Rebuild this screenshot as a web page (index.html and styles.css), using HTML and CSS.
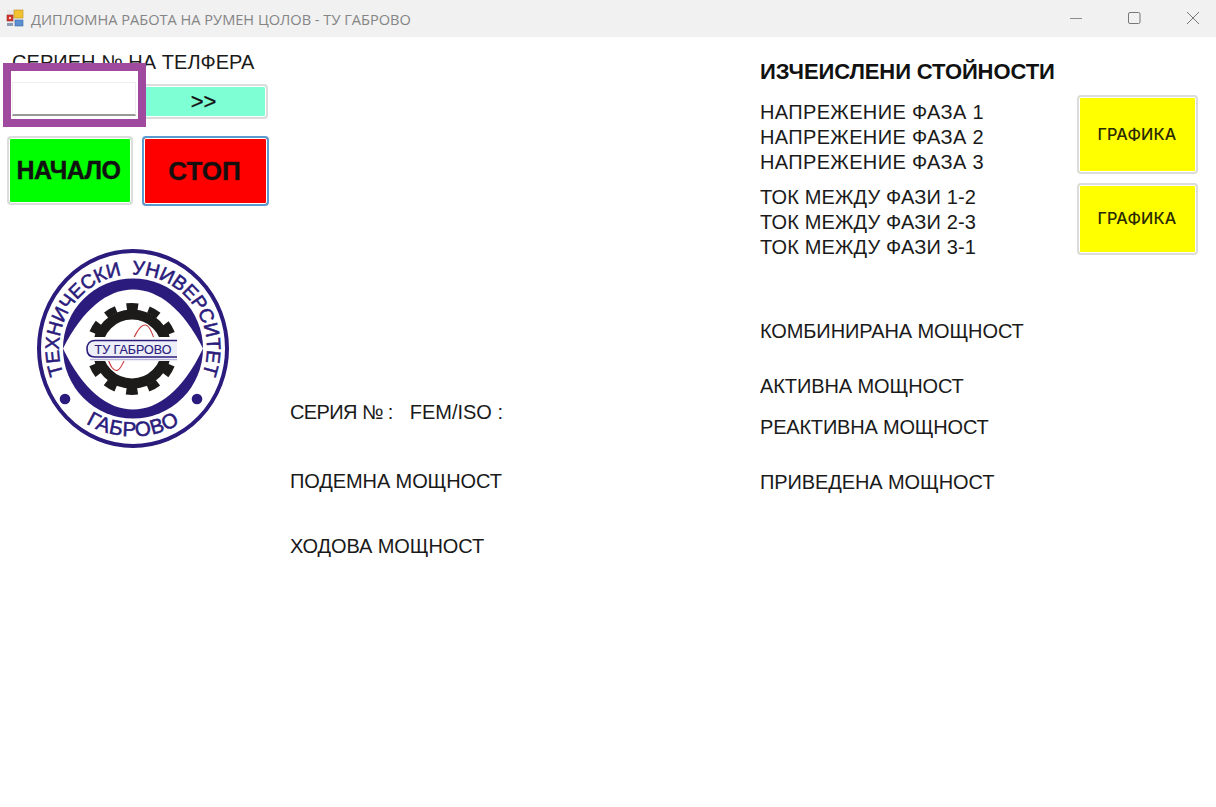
FILE: index.html
```html
<!DOCTYPE html>
<html lang="bg">
<head>
<meta charset="utf-8">
<title>ДИПЛОМНА РАБОТА НА РУМЕН ЦОЛОВ - ТУ ГАБРОВО</title>
<link rel="stylesheet" href="styles.css">
</head>
<body>
<div class="window">
  <header class="titlebar">
    <svg class="app-icon" width="18" height="18" viewBox="0 0 18 18">
      <rect x="1" y="1" width="16" height="16" fill="#e8e8ec"/>
      <rect x="8" y="1" width="9" height="8" fill="#f2c230" stroke="#b98c20" stroke-width=".6"/>
      <rect x="1" y="6" width="6" height="6" fill="#d8342c" stroke="#90302a" stroke-width=".6"/>
      <rect x="3" y="8" width="2" height="2" fill="#f4d0c8"/>
      <rect x="9" y="11" width="8" height="6" fill="#5b8fd0" stroke="#3a6aa8" stroke-width=".6"/>
      <rect x="1" y="14" width="6" height="3" fill="#8a9ab0"/>
    </svg>
    <span class="title">ДИПЛОМНА РАБОТА НА РУМЕН ЦОЛОВ - ТУ ГАБРОВО</span>
    <div class="controls">
      <svg width="14" height="14" viewBox="0 0 14 14"><path d="M2 7.5H14" stroke="#8c8c8c" stroke-width="1" fill="none"/></svg>
      <svg width="14" height="14" viewBox="0 0 14 14"><rect x="1.5" y="1.5" width="11.5" height="11" rx="1.5" stroke="#777" stroke-width="1" fill="none"/></svg>
      <svg width="14" height="14" viewBox="0 0 14 14"><path d="M1 1L13 13M13 1L1 13" stroke="#777" stroke-width="1" fill="none"/></svg>
    </div>
  </header>
  <main class="form">
    <section class="col-left">
      <div class="label serial-label">СЕРИЕН № НА ТЕЛФЕРА</div>
      <div class="serial-row">
        <input class="serial-input" type="text" aria-label="Сериен номер">
        <button class="btn btn-go" type="button">&gt;&gt;</button>
      </div>
      <div class="action-row">
        <button class="btn btn-start" type="button">НАЧАЛО</button>
        <button class="btn btn-stop" type="button">СТОП</button>
      </div>
      <svg class="logo" width="192" height="200" viewBox="0 0 192 200">
        <defs>
          <path id="arc-top-full" d="M96 173.5A74 74 0 0 1 96 25.5A74 74 0 0 1 96 173.5"/>
          <path id="arc-bot" d="M6 99.5A90 88 0 0 0 186 99.5"/>
        </defs>
        <ellipse cx="96" cy="99.5" rx="94" ry="97.5" fill="#fff" stroke="#2a1b7c" stroke-width="4"/>
        <circle cx="96" cy="99.5" r="70" fill="#2a1b7c"/>
        <path d="M26 99.5C46 59.5 71 40.5 96 40.5C121 40.5 146 59.5 166 99.5C146 141.5 121 160.5 96 160.5C71 160.5 46 141.5 26 99.5Z" fill="#fff"/>
        <text class="logo-text"><textPath href="#arc-top-full" startOffset="50%" text-anchor="middle">ТЕХНИЧЕСКИ&#160;&#160;УНИВЕРСИТЕТ</textPath></text>
        <text class="logo-text logo-text-bottom"><textPath href="#arc-bot" startOffset="50%" text-anchor="middle">ГАБРОВО</textPath></text>
        <circle cx="28" cy="150" r="5.3" fill="#2a1b7c"/>
        <circle cx="160" cy="150" r="5.3" fill="#2a1b7c"/>
        <g transform="translate(95 100)">
          <circle r="34.5" fill="none" stroke="#1d1a1a" stroke-width="10"/>
          <circle r="42.5" fill="none" stroke="#1d1a1a" stroke-width="7" stroke-dasharray="11.5 10.75" stroke-dashoffset="5.75"/>
          <path d="M-25 6C-22 18 -18 23 -14 21C-6 17 2 -24 13 -24C17 -24 21 -14 23 -7" fill="none" stroke="#c8383c" stroke-width="1.1"/>
          <rect x="-50" y="-12" width="100" height="24" fill="#fff"/>
          <path d="M45 -8.5H-37C-43 -8.5 -45 -4 -45 0C-45 4 -43 8 -37 8H45" fill="#eceef8" stroke="#2a1b7c" stroke-width="1.6"/>
          <path d="M-42 10.5H45" stroke="#b9b6dc" stroke-width="1.4" fill="none"/>
          <text class="logo-band" x="1" y="4.6" text-anchor="middle">ТУ ГАБРОВО</text>
        </g>
      </svg>
    </section>
    <section class="col-middle">
      <div class="label series-line"><span class="series-no">СЕРИЯ № :</span><span class="series-fem">FEM/ISO :</span></div>
      <div class="label lift">ПОДЕМНА МОЩНОСТ</div>
      <div class="label travel">ХОДОВА МОЩНОСТ</div>
    </section>
    <section class="col-right">
      <h2 class="heading">ИЗЧЕИСЛЕНИ СТОЙНОСТИ</h2>
      <div class="value-group voltages">
        <div class="value-lines label">
          <div>НАПРЕЖЕНИЕ ФАЗА 1</div>
          <div>НАПРЕЖЕНИЕ ФАЗА 2</div>
          <div>НАПРЕЖЕНИЕ ФАЗА 3</div>
        </div>
        <button class="btn btn-chart chart-tall" type="button">ГРАФИКА</button>
      </div>
      <div class="value-group currents">
        <div class="value-lines label">
          <div>ТОК МЕЖДУ ФАЗИ 1-2</div>
          <div>ТОК МЕЖДУ ФАЗИ 2-3</div>
          <div>ТОК МЕЖДУ ФАЗИ 3-1</div>
        </div>
        <button class="btn btn-chart chart-short" type="button">ГРАФИКА</button>
      </div>
      <div class="label power-combined">КОМБИНИРАНА МОЩНОСТ</div>
      <div class="label power-active">АКТИВНА МОЩНОСТ</div>
      <div class="label power-reactive">РЕАКТИВНА МОЩНОСТ</div>
      <div class="label power-reduced">ПРИВЕДЕНА МОЩНОСТ</div>
    </section>
  </main>
  <div class="highlight"></div>
</div>
</body>
</html>
```
FILE: styles.css
```css
* { box-sizing: border-box; }
html, body { margin: 0; height: 100%; background: #fff; }
body { overflow: hidden; font-family: "Liberation Sans", Arial, sans-serif; color: #1a1a1a; }
.window { position: relative; width: 1216px; height: 807px; background: #fff; }

.titlebar { display: flex; align-items: center; height: 37px; padding-left: 6px; background: #f1f1f1; }
.app-icon { flex: none; margin-bottom: 2px; }
.title { margin-left: 7px; font: 14.6px "Open Sans", "Noto Sans", sans-serif; color: #858585; white-space: nowrap; }
.controls { display: flex; gap: 45px; margin: 0 16px 2px auto; }

.form { display: grid; grid-template-columns: 290px 470px 456px; height: 770px; }
.label { font-size: 20px; line-height: 25px; letter-spacing: -.1px; color: #1a1a1a; white-space: nowrap; }

.btn { display: block; padding: 0; font-family: "Liberation Sans", Arial, sans-serif; color: #111; border: 2px solid #dcdcdc; border-radius: 4px; outline: 1px solid #fff; outline-offset: -3px; cursor: pointer; }

.col-left { padding: 13px 0 0 12px; }
.serial-label { letter-spacing: .05px; }
.serial-row { display: flex; align-items: flex-start; margin-top: 7px; }
.serial-input { flex: none; width: 124px; height: 34px; margin: 0; padding: 0; background: #fff; border: 1px solid #eee; border-bottom: 2px solid #999; border-radius: 0; }
.btn-go { width: 129px; height: 35px; margin: 2px 0 0 3px; background: #7fffd4; font-size: 22px; -webkit-text-stroke: .3px #111; }
.action-row { display: flex; gap: 9px; margin: 17px 0 0 -5px; }
.btn-start { width: 126px; height: 69px; padding-right: 3px; background: #0f0; font-size: 25px; font-weight: 700; letter-spacing: -.5px; -webkit-text-stroke: .4px #111; }
.btn-stop { width: 127px; height: 70px; padding-right: 2px; background: #f00; font-size: 26px; font-weight: 700; border-color: #5a9bd0; -webkit-text-stroke: .4px #400; }
.logo { display: block; margin: 43px 0 0 25px; }
.logo-text { font-size: 19.5px; letter-spacing: -.1px; fill: #2a1b7c; stroke: #2a1b7c; stroke-width: .55px; font-family: "Liberation Sans", Arial, sans-serif; }
.logo-text-bottom { font-size: 20.5px; letter-spacing: .6px; }
.logo-band { font-size: 12.5px; fill: #2a1b7c; stroke: #2a1b7c; stroke-width: .15px; font-family: "Liberation Sans", Arial, sans-serif; }

.col-middle { padding-top: 363px; }
.series-line { display: flex; gap: 17px; }
.series-no { letter-spacing: -.6px; }
.series-fem { letter-spacing: 0; }
.lift { margin-top: 44px; }
.travel { margin-top: 40px; }

.col-right { padding-top: 22px; }
.heading { margin: 0; font-size: 22px; line-height: 25px; font-weight: 700; letter-spacing: -.1px; color: #111; }
.value-group { display: flex; justify-content: space-between; width: 438px; }
.voltages { margin-top: 11px; }
.voltages .value-lines { padding-top: 5px; letter-spacing: .35px; }
.currents { margin-top: 8px; }
.currents .value-lines { padding-top: 2px; letter-spacing: .15px; }
.value-lines { flex: none; }
.btn-chart { width: 121px; padding-bottom: 2px; padding-right: 1px; background: #ff0; font: 500 16.2px "Inter", "Noto Sans", sans-serif; letter-spacing: .2px; color: #2b2b00; }
.chart-tall { height: 79px; }
.chart-short { height: 72px; }
.power-combined { margin-top: 59px; }
.power-active { margin-top: 30px; }
.power-reactive { margin-top: 16px; letter-spacing: -.2px; }
.power-reduced { margin-top: 30px; }

.highlight { position: absolute; left: 3px; top: 63px; width: 143px; height: 64px; border: 8px solid #a04a9f; }
```
